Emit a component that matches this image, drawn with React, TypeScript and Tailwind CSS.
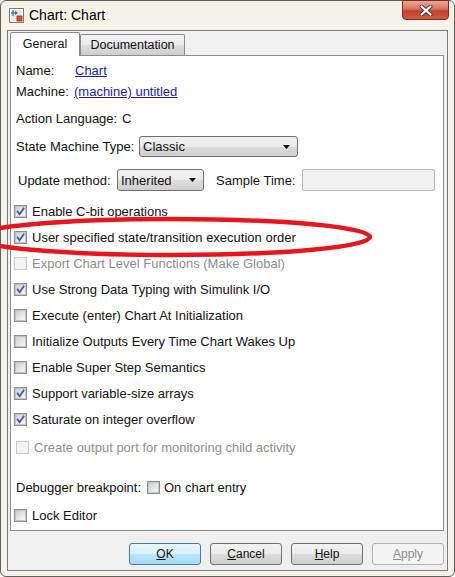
import React from "react";

const FONT = { fontFamily: '"Liberation Sans", Arial, sans-serif' };

function Check({ checked = false, disabled = false }: { checked?: boolean; disabled?: boolean }) {
  return (
    <span
      className={`flex h-[13px] w-[13px] shrink-0 items-center justify-center border ${
        disabled ? "border-[#c9c9c9] bg-[#f6f6f6]" : "border-[#8e8f8f] bg-white"
      }`}
    >
      <span
        className={`relative flex h-[11px] w-[11px] items-center justify-center ${
          disabled
            ? "bg-[#f4f4f4]"
            : "border border-[#c2c6cb] bg-[linear-gradient(135deg,#cdd1d5_0%,#e6e7e8_55%,#f7f7f7_100%)]"
        }`}
      >
        {checked && (
          <svg width="11" height="11" viewBox="0 0 11 11" className="absolute left-[-1px] top-[-1px]">
            <path d="M2.6 5.4 L4.6 8.2 L8.6 2.4" fill="none" stroke="#3a56a0" strokeWidth="1.7" strokeLinecap="square" />
          </svg>
        )}
      </span>
    </span>
  );
}

function CheckRow({ label, checked = false, disabled = false }: { label: string; checked?: boolean; disabled?: boolean }) {
  return (
    <div className="flex h-[26px] items-center gap-[5px] pl-[3px]">
      <Check checked={checked} disabled={disabled} />
      <span className={disabled ? "text-[#8d8d8d]" : "text-[#111]"}>{label}</span>
    </div>
  );
}

function Arrow() {
  return (
    <svg width="8" height="4" viewBox="0 0 8 4">
      <path d="M0 0 H7 L3.5 4 Z" fill="#111" />
    </svg>
  );
}

function Btn({ children, primary = false, disabled = false }: { children: React.ReactNode; primary?: boolean; disabled?: boolean }) {
  const cls = disabled
    ? "border-[#adb2b5] bg-[#f4f4f4] text-[#8a8a8a]"
    : primary
    ? "border-[#3c7fb1] bg-[linear-gradient(#eaf6fd_0%,#d9f0fc_50%,#bee6fd_50%,#a7d9f5_100%)] text-[#111]"
    : "border-[#707070] bg-[linear-gradient(#f2f2f2_0%,#ebebeb_50%,#dddddd_50%,#cfcfcf_100%)] text-[#111]";
  return (
    <div className={`flex h-[22px] w-[72px] items-center justify-center rounded-[3px] border text-[12px] ${cls}`}>
      <span>{children}</span>
    </div>
  );
}

export default function App() {
  return (
    <div className="relative h-[577px] w-[455px] overflow-hidden bg-white" style={FONT}>
      <div className="flex h-[577px] w-[455px] flex-col rounded-[6px] border border-[#5f5f5f] bg-[#f5f2e8] text-[13px] leading-[15px]">
        {/* title bar */}
        <div className="flex h-[29px] shrink-0 items-start">
          <div className="mt-[7px] flex items-center gap-[5px] pl-[8px]">
            <svg width="15" height="15" viewBox="0 0 15 15">
              <rect x="0.5" y="0.5" width="14" height="14" fill="#e9e9e9" stroke="#7a7a7a" />
              <rect x="1.5" y="1.5" width="12" height="12" fill="none" stroke="#ffffff" />
              <path d="M2 5 H8" stroke="#2a6fb8" strokeWidth="1.2" />
              <path d="M4 2 V8" stroke="#2a6fb8" strokeWidth="1.2" />
              <path d="M6 3 L9 5 L6 7 Z" fill="#2a6fb8" />
              <rect x="8" y="8" width="5" height="5" fill="#d9541e" stroke="#8a2a0a" strokeWidth="0.8" />
            </svg>
            <span className="text-[14px] text-black">Chart: Chart</span>
          </div>
          <div className="ml-auto mr-[5px] -mt-[1px] flex h-[20px] w-[47px] items-center justify-center rounded-b-[4px] border border-[#7d2a1c] bg-[linear-gradient(#eaa99a_0%,#d8735f_45%,#c4432c_55%,#d05a40_100%)]">
            <svg width="14" height="11" viewBox="0 0 14 11">
              <path d="M2.5 1.5 L11.5 9.5 M11.5 1.5 L2.5 9.5" stroke="#3b3b3b" strokeWidth="4" strokeLinecap="round" />
              <path d="M2.5 1.5 L11.5 9.5 M11.5 1.5 L2.5 9.5" stroke="#ffffff" strokeWidth="2.2" strokeLinecap="round" />
            </svg>
          </div>
        </div>

        {/* client area */}
        <div className="mx-[6px] mb-[5px] flex flex-1 flex-col border border-[#7a7a7a] bg-[#f0f0f0] pl-[2px] pr-[3px]">
          {/* tabs */}
          <div className="mt-[1px] flex h-[23px] items-end text-[12.5px]">
            <div className="relative z-10 -mb-[1px] flex h-[24px] w-[70px] items-center justify-center rounded-t-[2px] border border-b-0 border-[#898c95] bg-white pb-[1px]">
              <span className="text-[#111]">General</span>
            </div>
            <div className="flex h-[21px] w-[105px] items-center justify-center rounded-t-[2px] border border-b-0 border-[#898c95] bg-[linear-gradient(#f2f2f2_0%,#ebebeb_50%,#dddddd_50%,#cfcfcf_100%)]">
              <span className="text-[#111]">Documentation</span>
            </div>
          </div>

          {/* panel */}
          <div className="flex h-[476px] flex-col border border-[#898c95] bg-white pt-[4px] text-[#111]">
            <div className="flex h-[21px] items-center pl-[5px]">
              <span className="w-[59px]">Name:</span>
              <span className="text-[#1c1c9c] underline">Chart</span>
            </div>
            <div className="flex h-[21px] items-center pl-[5px]">
              <span className="w-[58px]">Machine:</span>
              <span className="text-[#1c1c9c] underline">(machine) untitled</span>
            </div>
            <div className="mt-[6px] flex h-[21px] items-center pl-[5px]">
              <span className="w-[106px]">Action Language:</span>
              <span>C</span>
            </div>
            <div className="mt-[7px] flex h-[21px] items-center pl-[5px]">
              <span className="w-[123px]">State Machine Type:</span>
              <div className="flex h-[21px] w-[159px] items-center justify-between rounded-[3px] border border-[#707070] bg-[linear-gradient(#f2f2f2_0%,#ebebeb_50%,#dddddd_50%,#cfcfcf_100%)] pl-[3px] pr-[6px]">
                <span>Classic</span>
                <Arrow />
              </div>
            </div>
            <div className="mt-[12px] flex h-[22px] items-center pl-[7px]">
              <span className="w-[99px]">Update method:</span>
              <div className="flex h-[22px] w-[87px] items-center justify-between rounded-[3px] border border-[#707070] bg-[linear-gradient(#f2f2f2_0%,#ebebeb_50%,#dddddd_50%,#cfcfcf_100%)] pl-[3px] pr-[6px]">
                <span>Inherited</span>
                <Arrow />
              </div>
              <span className="ml-[12px] w-[86px]">Sample Time:</span>
              <div className="h-[22px] w-[133px] rounded-[2px] border border-[#b9b9b9] bg-[#f0f0f0]" />
            </div>

            <div className="mt-[7px]">
              <CheckRow label="Enable C-bit operations" checked />
              <CheckRow label="User specified state/transition execution order" checked />
              <CheckRow label="Export Chart Level Functions (Make Global)" disabled />
              <CheckRow label="Use Strong Data Typing with Simulink I/O" checked />
              <CheckRow label="Execute (enter) Chart At Initialization" />
              <CheckRow label="Initialize Outputs Every Time Chart Wakes Up" />
              <CheckRow label="Enable Super Step Semantics" />
              <CheckRow label="Support variable-size arrays" checked />
              <CheckRow label="Saturate on integer overflow" checked />
            </div>
            <div className="mt-[2px] flex h-[26px] items-center gap-[5px] pl-[5px]">
              <Check disabled />
              <span className="text-[#8d8d8d]">Create output port for monitoring child activity</span>
            </div>
            <div className="mt-[14px] flex h-[26px] items-center pl-[5px]">
              <span className="w-[131px]">Debugger breakpoint:</span>
              <Check />
              <span className="ml-[4px]">On chart entry</span>
            </div>
            <div className="mt-[2px]">
              <CheckRow label="Lock Editor" />
            </div>
          </div>

          {/* buttons */}
          <div className="mt-[12px] flex h-[22px] justify-end gap-[9px]">
            <Btn primary>
              <span className="underline">O</span>K
            </Btn>
            <Btn>
              <span className="underline">C</span>ancel
            </Btn>
            <Btn>
              <span className="underline">H</span>elp
            </Btn>
            <Btn disabled>
              <span className="underline">A</span>pply
            </Btn>
          </div>
        </div>
      </div>

      {/* red annotation ellipse */}
      <svg className="pointer-events-none absolute left-0 top-0" width="455" height="577" viewBox="0 0 455 577">
        <ellipse cx="172" cy="237" rx="198" ry="18" fill="none" stroke="#e8151f" strokeWidth="4.5" />
      </svg>
    </div>
  );
}
